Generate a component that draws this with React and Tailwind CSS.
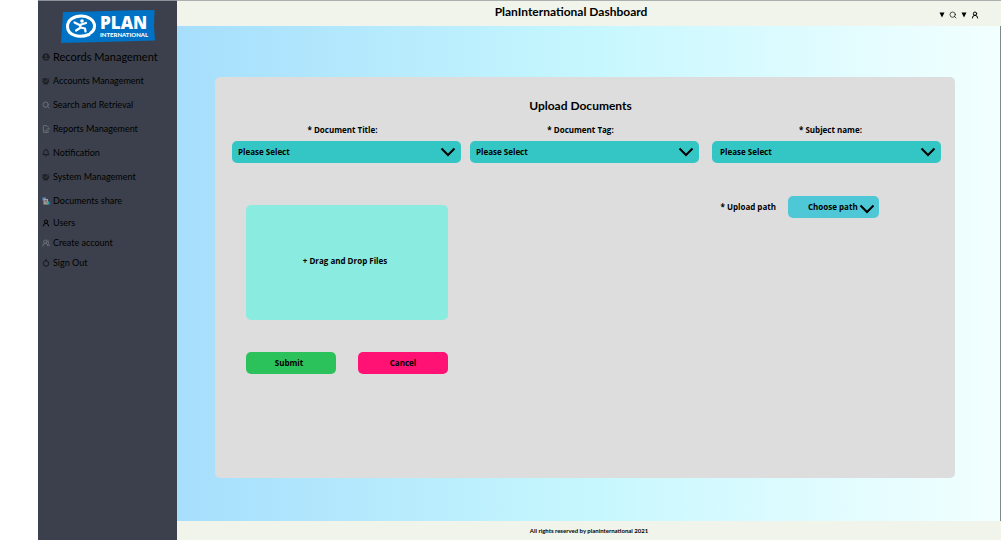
import React from "react";
import { Bell, FilePenLine, Search, UserRound, UsersRound } from "lucide-react";

function ShareIcon() {
  return (
    <svg viewBox="0 0 16 16" className="size-2 shrink-0" aria-hidden="true">
      <path d="M1 1h7v6H1z" fill="#4d8fd0" />
      <path d="M3 4h9v11H3z" fill="#a7a09a" />
      <path d="M5 7h5M5 10h5" stroke="#5c5c5c" strokeWidth="1.5" />
      <path d="M10 9h5v6h-5z" fill="#2aa5b5" />
    </svg>
  );
}

function RecordsIcon() {
  return (
    <svg viewBox="0 0 16 16" className="size-2 shrink-0" aria-hidden="true">
      <path d="M4 1h8l4 7-4 7H4L0 8z" fill="#1d2026" />
      <circle cx="8" cy="6" r="2" fill="#3f444e" />
      <path d="M4 12c1-3 7-3 8 0z" fill="#3f444e" />
    </svg>
  );
}

function ManageIcon() {
  return (
    <svg viewBox="0 0 16 16" className="size-2 shrink-0" aria-hidden="true">
      <path d="M1 4l3-2 8 1 3-2-1 9-3 5H4l-3-5z" fill="#1f2329" />
      <path d="M4 7l3 3 8-8" fill="none" stroke="#484d57" strokeWidth="1.5" />
    </svg>
  );
}

function SignOutIcon() {
  return (
    <svg viewBox="0 0 16 16" className="size-2 shrink-0" aria-hidden="true">
      <circle cx="8" cy="9" r="5.500" fill="none" stroke="#15181d" strokeWidth="2" />
      <path d="M8 0v4" stroke="#15181d" strokeWidth="2" />
    </svg>
  );
}

function lucide(Icon, tone) {
  return <Icon className={"size-2 shrink-0 " + tone} strokeWidth={3} aria-hidden="true" />;
}

const mainLinks = [
  { label: "Records Management", icon: <RecordsIcon />, large: true },
  { label: "Accounts Management", icon: <ManageIcon /> },
  { label: "Search and Retrieval", icon: lucide(Search, "text-[#6d7178]") },
  { label: "Reports Management", icon: lucide(FilePenLine, "text-[#6d7178]") },
  { label: "Notification", icon: lucide(Bell, "text-[#15181d]") },
  { label: "System Management", icon: <ManageIcon /> },
  { label: "Documents share", icon: <ShareIcon /> },
];

const accountLinks = [
  { label: "Users", icon: lucide(UserRound, "text-black") },
  { label: "Create account", icon: lucide(UsersRound, "text-[#6d7178]") },
  { label: "Sign Out", icon: <SignOutIcon /> },
];

function Logo() {
  return (
    <svg viewBox="0 0 94 33" className="h-[33px] w-[94px]" role="img" aria-label="Plan International">
      <path d="M2 2 30 1.4 60 .4 93.500 0 93 16 94 30.500 60 31.500 30 32.300 0 33 1 18z" fill="#0072c6" />
      <path
        d="M28 24.500C17 29 6.500 24.500 6.500 16.500 6.500 10 13 6 20 6s13.500 4 13.500 10c0 3-1.500 5.500-4 7"
        fill="none"
        stroke="#fff"
        strokeWidth="3"
        strokeLinecap="round"
      />
      <circle cx="21" cy="11" r="1.800" fill="#fff" />
      <path
        d="M13.500 12.500l5 2.500 6.500-2M19.500 15l-.5 3-4 2.500M19.500 17.500l4.500 1 .5 3"
        fill="none"
        stroke="#fff"
        strokeWidth="2.200"
        strokeLinecap="round"
        strokeLinejoin="round"
      />
      <text x="39" y="19" fill="#fff" fontFamily="Open Sans, sans-serif" fontWeight="800" fontSize="17">
        PLAN
      </text>
      <text x="39" y="27" fill="#fff" fontFamily="Lato, sans-serif" fontWeight="900" fontSize="6">
        INTERNATIONAL
      </text>
    </svg>
  );
}

function NavItem({ item, height }) {
  return (
    <li>
      <a href="#" className={"flex items-center gap-[3px] pl-1 whitespace-nowrap " + height}>
        {item.icon}
        <span className={item.large ? "text-[11px]" : "text-[9px]"}>{item.label}</span>
      </a>
    </li>
  );
}

function Chevron({ className }) {
  return (
    <svg viewBox="0 0 16 10" className={"pointer-events-none absolute h-[10px] w-4 " + className} aria-hidden="true">
      <path d="M1.500 1.500 8 8l6.500-6.500" fill="none" stroke="#000" strokeWidth="2" />
    </svg>
  );
}

function SelectField({ id, label, labelClass, selectClass, className }) {
  return (
    <div className={"flex flex-1 flex-col gap-1 " + className}>
      <label htmlFor={id} className={"text-center leading-[14px] " + labelClass}>
        {label}
      </label>
      <div className="relative">
        <select id={id} className={"block h-[22px] w-full appearance-none rounded-[5px] bg-[#34c6c4] " + selectClass}>
          <option>Please Select</option>
        </select>
        <Chevron className="top-[6px] right-[5px]" />
      </div>
    </div>
  );
}

export default function App() {
  return (
    <div className="flex min-h-screen bg-white pl-[38px] font-['Lato',sans-serif] text-black">
      <aside className="w-[139px] shrink-0 border-t border-[#8d9299] bg-[#3b404c]">
        <div className="flex justify-center pt-[9px]">
          <Logo />
        </div>
        <nav className="pt-[2px]">
          <ul>
            {mainLinks.map((item) => (
              <NavItem key={item.label} item={item} height="h-6" />
            ))}
            {accountLinks.map((item) => (
              <NavItem key={item.label} item={item} height="h-5" />
            ))}
          </ul>
        </nav>
      </aside>

      <div className="flex min-w-0 flex-1 flex-col">
        <header className="flex h-[26px] items-center border-t border-[#a9b0ae] bg-[#f1f4ea] pr-[22px] pb-1">
          <h1 className="flex-1 pl-[26px] text-center text-xs font-bold">PlanInternational Dashboard</h1>
          <div className="flex items-center gap-1 pt-[6px]">
            <button type="button" aria-label="Open search options">
              <svg viewBox="0 0 6 6" className="size-[6px]" aria-hidden="true">
                <path d="M.5.5h5L3 5.500z" />
              </svg>
            </button>
            <button type="button" aria-label="Search">
              <Search className="size-2" strokeWidth={2} />
            </button>
            <button type="button" aria-label="Open account menu">
              <svg viewBox="0 0 6 6" className="size-[6px]" aria-hidden="true">
                <path d="M.5.5h5L3 5.500z" />
              </svg>
            </button>
            <button type="button" aria-label="Account">
              <UserRound className="size-2" strokeWidth={3} />
            </button>
          </div>
        </header>

        <main className="flex flex-1 border-r border-[#808888] bg-linear-to-r from-[#a6defc] via-[#c6f7fe] to-[#f2ffff] pt-[51px] pr-[45px] pb-[43px] pl-[38px]">
          <form className="flex-1 rounded-[5px] bg-[#dddddd] pt-5 pr-[14px] pl-[17px] font-['Open_Sans',sans-serif] text-[8px] font-bold">
            <h2 className="pr-3 text-center font-['Lato',sans-serif] text-xs leading-[18px]">Upload Documents</h2>

            <div className="mt-2 flex gap-[9px]">
              <SelectField id="title" label="* Document Title:" labelClass="pr-2" selectClass="pl-[6px]" className="" />
              <SelectField id="tag" label="* Document Tag:" labelClass="pr-2" selectClass="pl-[6px]" className="" />
              <SelectField id="subject" label="* Subject name:" labelClass="pl-2" selectClass="pl-2" className="ml-1" />
            </div>

            <div className="mt-[33px] flex items-start justify-between pr-[62px] pl-[14px]">
              <div className="mt-[9px] w-[202px]">
                <label
                  htmlFor="files"
                  className="flex h-[115px] cursor-pointer items-center justify-center rounded-[5px] bg-[#8aebe1] pr-1 pb-1"
                >
                  + Drag and Drop Files
                </label>
                <input id="files" type="file" multiple className="sr-only" />
                <div className="mt-8 flex justify-between">
                  <button type="submit" className="h-[22px] w-[90px] rounded-[5px] bg-[#2bc25c] pr-1">
                    Submit
                  </button>
                  <button type="button" className="h-[22px] w-[90px] rounded-[5px] bg-[#ff1273]">
                    Cancel
                  </button>
                </div>
              </div>

              <div className="flex items-center gap-3">
                <label htmlFor="path">* Upload path</label>
                <div className="relative">
                  <select id="path" className="block h-[22px] w-[91px] appearance-none rounded-[5px] bg-[#4ec7d6] pl-5">
                    <option>Choose path</option>
                  </select>
                  <Chevron className="top-2 right-1" />
                </div>
              </div>
            </div>
          </form>
        </main>

        <footer className="flex h-[19px] items-center justify-center bg-[#f1f4ea] text-[6px] font-bold">
          All rights reserved by planinternational 2021
        </footer>
      </div>
    </div>
  );
}
